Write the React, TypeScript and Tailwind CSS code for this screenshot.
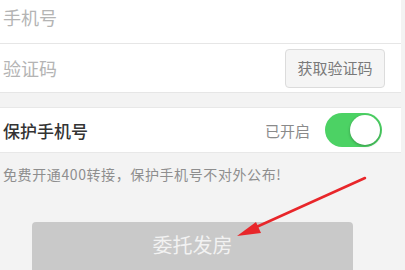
export default function App() {
  return (
    <div
      className="relative h-[270px] w-[405px] overflow-hidden bg-[#f3f3f3]"
      style={{ fontFamily: '"Noto Sans CJK SC", "Noto Sans", sans-serif' }}
    >
      <div className="w-[401px] bg-white">
        <div className="flex h-[44px] items-center border-b border-[#e6e6e6] pb-[9px] pl-[3px]">
          <span className="text-[18px] leading-none text-[#b4b4b4]">手机号</span>
        </div>
        <div className="flex h-[49px] items-center justify-between border-b border-[#e6e6e6] pl-[3px] pr-[16px]">
          <span className="text-[18px] leading-none text-[#b4b4b4]">验证码</span>
          <button className="flex h-[39px] w-[100px] items-center justify-center rounded-[4px] border border-[#dcdcdc] bg-[#f5f5f5] text-[15px] text-[#7a7a7a]">
            获取验证码
          </button>
        </div>
      </div>

      <div className="mt-[14px] flex h-[46px] w-[401px] items-center justify-between border-y border-[#e8e8e8] bg-white pl-[3px] pr-[19px]">
        <span className="text-[17px] font-medium leading-none text-[#333]">保护手机号</span>
        <div className="flex items-center gap-[15px]">
          <span className="text-[15px] leading-none text-[#8a8a8a]">已开启</span>
          <div className="flex h-[34px] w-[57px] items-center justify-end rounded-full bg-[#4cd264] p-[2px]">
            <div className="h-[30px] w-[30px] rounded-full bg-white shadow-[0_1px_3px_rgba(0,0,0,0.3)]" />
          </div>
        </div>
      </div>

      <p className="mt-[14px] pl-[3px] text-[14px] leading-none tracking-[0.6px] text-[#8e8e8e]">
        免费开通400转接，保护手机号不对外公布!
      </p>

      <div className="mt-[41px] pl-[32px]">
        <button className="flex h-[60px] w-[321px] items-start justify-center rounded-[4px] bg-[#c9c9c9] pt-[8px] text-[20px] leading-[30px] text-[#f2f2f2]">
          委托发房
        </button>
      </div>

      <svg className="absolute left-0 top-0" width="405" height="270" viewBox="0 0 405 270">
        <line x1="365" y1="178" x2="252" y2="229" stroke="#e8262a" strokeWidth="2.5" strokeLinecap="round" />
        <polygon points="237,236 256,222 261,233" fill="#e8262a" />
      </svg>
    </div>
  );
}
